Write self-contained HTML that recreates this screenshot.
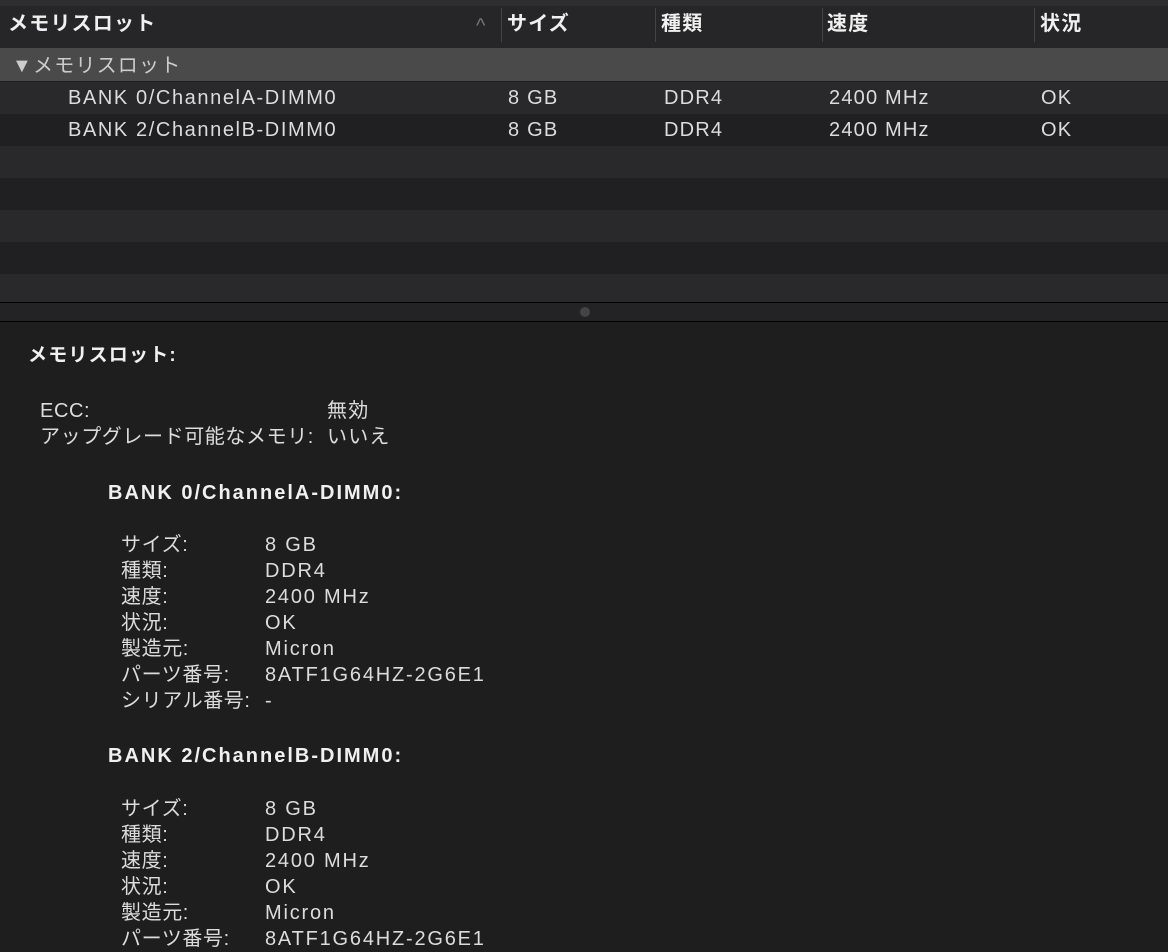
<!DOCTYPE html>
<html><head><meta charset="utf-8"><style>
body{margin:0;width:1168px;height:952px;background:#1e1e1e;overflow:hidden;font-family:"Liberation Sans","Noto Sans CJK JP",sans-serif;color:#dcdcdc;font-size:20px;letter-spacing:1.2px}
.a{position:absolute;white-space:nowrap;line-height:24px}
.row{position:absolute;left:0;width:1168px;height:32px}
.b{font-weight:bold;color:#f0f0f0}
.sep{position:absolute;top:8px;width:1px;height:34px;background:#444}
.d{font-size:20px;line-height:26px}
.j{letter-spacing:0.6px}
</style></head><body>
<div class="row" style="top:0;height:48px;background:#262628;border-top:6px solid #2e2e30;box-sizing:border-box"></div>
<div class="a b" style="left:8px;top:12px">メモリスロット</div>
<div class="a" style="left:476px;top:14px;color:#777">^</div>
<div class="sep" style="left:501px"></div><div class="sep" style="left:655px"></div><div class="sep" style="left:822px"></div><div class="sep" style="left:1034px"></div>
<div class="a b" style="left:507px;top:12px">サイズ</div>
<div class="a b" style="left:661px;top:12px">種類</div>
<div class="a b" style="left:827px;top:12px">速度</div>
<div class="a b" style="left:1040px;top:12px">状況</div>
<div class="row" style="top:48px;height:33px;background:#4a4a4a"></div>
<div class="a" style="left:12px;top:54px;color:#ccc">▼メモリスロット</div>
<div class="row" style="top:82px;background:#29292b"></div>
<div class="row" style="top:114px;background:#202022"></div>
<div class="row" style="top:146px;background:#29292b"></div>
<div class="row" style="top:178px;background:#202022"></div>
<div class="row" style="top:210px;background:#29292b"></div>
<div class="row" style="top:242px;background:#202022"></div>
<div class="row" style="top:274px;height:28px;background:#29292b"></div>
<div class="a" style="left:68px;top:86px;letter-spacing:1.6px">BANK 0/ChannelA-DIMM0</div>
<div class="a" style="left:508px;top:86px">8 GB</div><div class="a" style="left:664px;top:86px">DDR4</div><div class="a" style="left:829px;top:86px">2400 MHz</div><div class="a" style="left:1041px;top:86px">OK</div>
<div class="a" style="left:68px;top:118px;letter-spacing:1.6px">BANK 2/ChannelB-DIMM0</div>
<div class="a" style="left:508px;top:118px">8 GB</div><div class="a" style="left:664px;top:118px">DDR4</div><div class="a" style="left:829px;top:118px">2400 MHz</div><div class="a" style="left:1041px;top:118px">OK</div>
<div class="row" style="top:302px;height:1px;background:#000"></div>
<div class="row" style="top:303px;height:18px;background:#232325"></div>
<div class="a" style="left:580px;top:307px;width:10px;height:10px;border-radius:5px;background:#444"></div>
<div class="row" style="top:321px;height:1px;background:#000"></div>
<div class="a b" style="left:28px;top:344px;font-size:19px">メモリスロット:</div>
<div class="a d j" style="left:40px;top:398px">ECC:<br>アップグレード可能なメモリ:</div>
<div class="a d" style="left:327px;top:398px">無効<br>いいえ</div>
<div class="a b" style="left:108px;top:481px;letter-spacing:2px">BANK 0/ChannelA-DIMM0:</div>
<div class="a d j" style="left:121px;top:532px">サイズ:<br>種類:<br>速度:<br>状況:<br>製造元:<br>パーツ番号:<br>シリアル番号:</div>
<div class="a d" style="left:265px;top:532px;letter-spacing:1.8px">8 GB<br>DDR4<br>2400 MHz<br>OK<br>Micron<br>8ATF1G64HZ-2G6E1<br>-</div>
<div class="a b" style="left:108px;top:744px;letter-spacing:2px">BANK 2/ChannelB-DIMM0:</div>
<div class="a d j" style="left:121px;top:796px">サイズ:<br>種類:<br>速度:<br>状況:<br>製造元:<br>パーツ番号:</div>
<div class="a d" style="left:265px;top:796px;letter-spacing:1.8px">8 GB<br>DDR4<br>2400 MHz<br>OK<br>Micron<br>8ATF1G64HZ-2G6E1</div>
</body></html>
